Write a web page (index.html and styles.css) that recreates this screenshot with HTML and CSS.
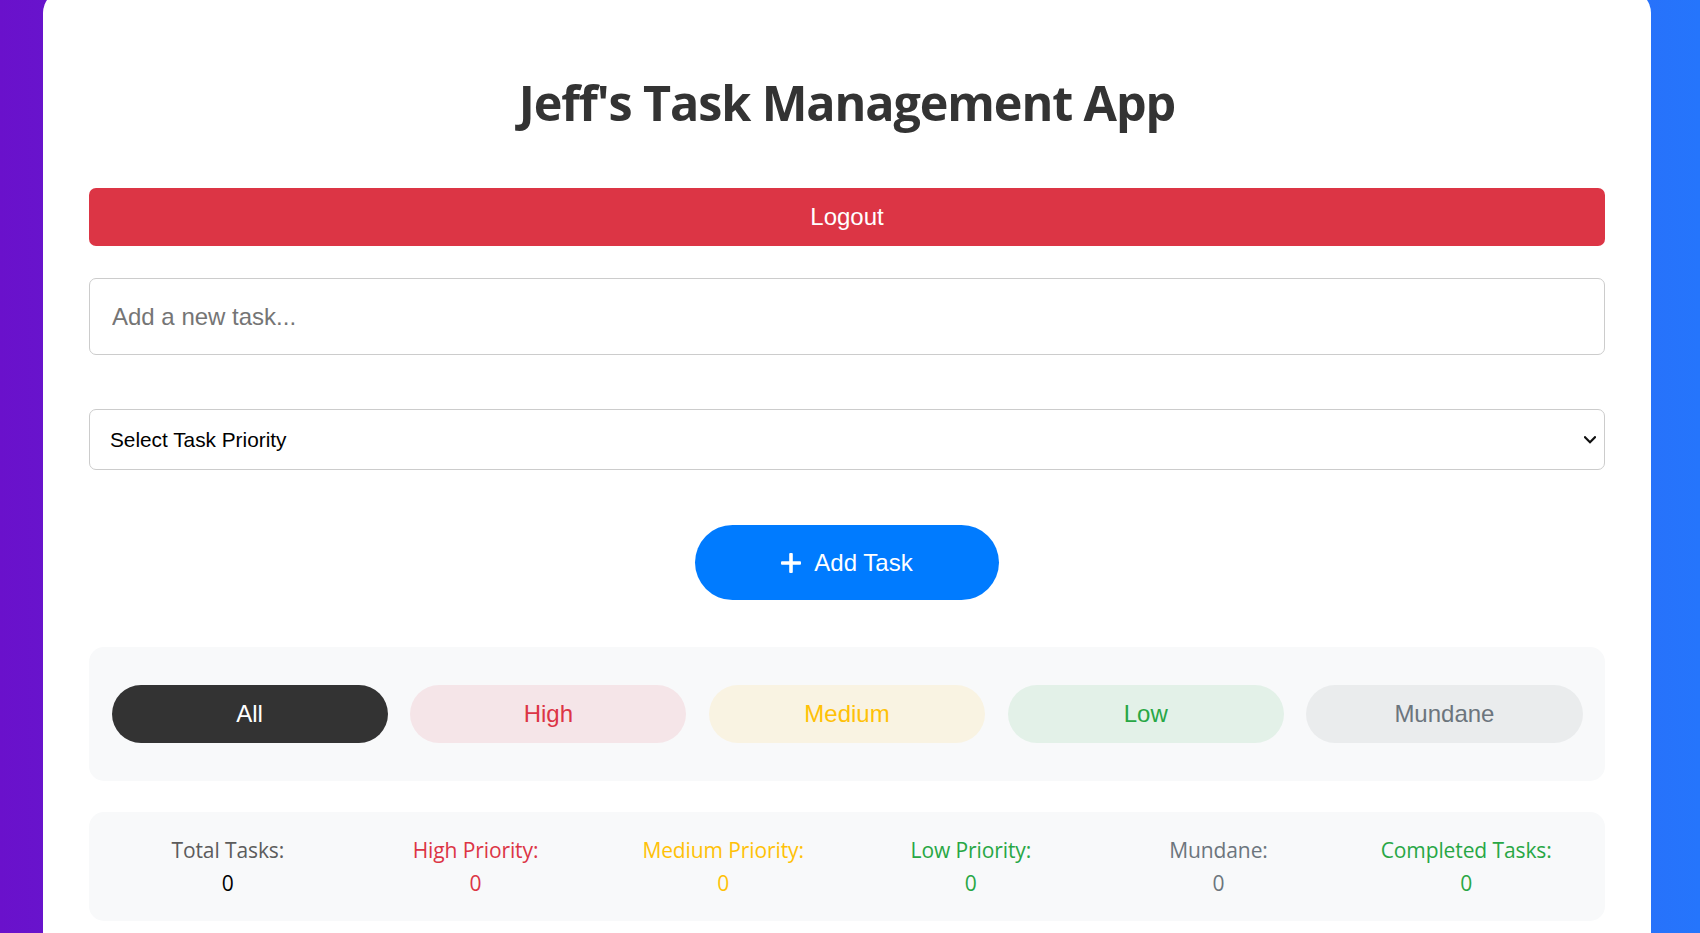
FILE: index.html
```html
<!DOCTYPE html>
<html lang="en">
<head>
<meta charset="utf-8">
<title>Jeff's Task Management App</title>
<link rel="stylesheet" href="styles.css">
</head>
<body>
  <main class="card">
    <h1 class="title">Jeff's Task Management App</h1>

    <button class="logout-btn" type="button">Logout</button>

    <input class="task-input" type="text" placeholder="Add a new task...">

    <div class="select-wrap">
      <select class="priority-select">
        <option>Select Task Priority</option>
        <option>High</option>
        <option>Medium</option>
        <option>Low</option>
        <option>Mundane</option>
      </select>
      <svg class="select-chevron" viewBox="0 0 12 8" width="12" height="8" aria-hidden="true">
        <path d="M1 1.2 L6 6.2 L11 1.2" fill="none" stroke="#111" stroke-width="2.2" stroke-linecap="square"/>
      </svg>
    </div>

    <div class="add-row">
      <button class="add-btn" type="button">
        <svg class="plus-icon" viewBox="0 0 20 20" width="20" height="20" aria-hidden="true">
          <rect x="0" y="8.2" width="20" height="3.6" rx="1" fill="#fff"/>
          <rect x="8.2" y="0" width="3.6" height="20" rx="1" fill="#fff"/>
        </svg>
        <span>Add Task</span>
      </button>
    </div>

    <div class="filter-panel">
      <button class="filter-btn filter-all" type="button">All</button>
      <button class="filter-btn filter-high" type="button">High</button>
      <button class="filter-btn filter-medium" type="button">Medium</button>
      <button class="filter-btn filter-low" type="button">Low</button>
      <button class="filter-btn filter-mundane" type="button">Mundane</button>
    </div>

    <div class="stats-panel">
      <div class="stat stat-total">
        <div class="stat-label">Total Tasks:</div>
        <div class="stat-value">0</div>
      </div>
      <div class="stat stat-high">
        <div class="stat-label">High Priority:</div>
        <div class="stat-value">0</div>
      </div>
      <div class="stat stat-medium">
        <div class="stat-label">Medium Priority:</div>
        <div class="stat-value">0</div>
      </div>
      <div class="stat stat-low">
        <div class="stat-label">Low Priority:</div>
        <div class="stat-value">0</div>
      </div>
      <div class="stat stat-mundane">
        <div class="stat-label">Mundane:</div>
        <div class="stat-value">0</div>
      </div>
      <div class="stat stat-completed">
        <div class="stat-label">Completed Tasks:</div>
        <div class="stat-value">0</div>
      </div>
    </div>
  </main>
</body>
</html>
```

FILE: styles.css
```css
html {
  overflow: hidden;
}

body {
  margin: 0;
  min-height: 100vh;
  background: linear-gradient(to right, #6a11cb, #2575fc);
  font-family: "Open Sans", "Noto Sans", sans-serif;
}

.card {
  box-sizing: border-box;
  width: 1608px;
  margin: -10px 0 0 43px;
  padding: 46px 46px 46px;
  background: #fff;
  border-radius: 23px;
  display: flex;
  flex-direction: column;
}

.title {
  margin: 34px 0 53px;
  text-align: center;
  font-size: 48.5px;
  line-height: 65px;
  font-weight: 700;
  color: #333;
  letter-spacing: -1.1px;
}

.logout-btn {
  font-family: "Liberation Sans", Arial, sans-serif;
  font-size: 24px;
  line-height: 28px;
  padding: 15px 0;
  border: none;
  border-radius: 7px;
  background: #dc3545;
  color: #fff;
  margin-bottom: 32px;
}

.task-input {
  box-sizing: border-box;
  height: 77px;
  padding: 0 22px;
  border: 1px solid #ccc;
  border-radius: 7px;
  font-family: "Liberation Sans", Arial, sans-serif;
  font-size: 24px;
  color: #222;
  margin: 0 0 54px;
  outline: none;
}

.task-input::placeholder {
  color: #757575;
}

.select-wrap {
  position: relative;
  margin-bottom: 55px;
}

.priority-select {
  box-sizing: border-box;
  width: 100%;
  height: 61px;
  padding: 0 40px 0 20px;
  border: 1px solid #ccc;
  border-radius: 7px;
  background: #fff;
  font-family: "Liberation Sans", Arial, sans-serif;
  font-size: 20.8px;
  color: #000;
  appearance: none;
  -webkit-appearance: none;
  outline: none;
}

.select-chevron {
  position: absolute;
  right: 9px;
  top: 26.5px;
  pointer-events: none;
}

.add-row {
  display: flex;
  justify-content: center;
  margin-bottom: 47px;
}

.add-btn {
  display: inline-flex;
  align-items: center;
  gap: 13px;
  height: 75px;
  padding: 0 86px;
  border: none;
  border-radius: 38px;
  background: #007bff;
  color: #fff;
  font-family: "Liberation Sans", Arial, sans-serif;
  font-size: 24px;
}

.plus-icon {
  display: block;
  flex: none;
}

.filter-panel {
  display: flex;
  gap: 22.5px;
  padding: 38px 22.5px;
  background: #f8f9fa;
  border-radius: 15px;
  margin-bottom: 31px;
}

.filter-btn {
  flex: 1;
  height: 58px;
  border: none;
  border-radius: 29px;
  font-family: "Liberation Sans", Arial, sans-serif;
  font-size: 24px;
}

.filter-all {
  background: #333;
  color: #fff;
}

.filter-high {
  background: #f5e5e8;
  color: #dc3545;
}

.filter-medium {
  background: #f9f3e2;
  color: #ffc107;
}

.filter-low {
  background: #e3f1e8;
  color: #28a745;
}

.filter-mundane {
  background: #eaeced;
  color: #6c757d;
}

.stats-panel {
  display: grid;
  grid-template-columns: repeat(6, 1fr);
  padding: 24px 15px;
  background: #f8f9fa;
  border-radius: 15px;
}

.stat {
  text-align: center;
  font-size: 21px;
  line-height: 28.6px;
  letter-spacing: -0.1px;
}

.stat-label {
  margin-bottom: 4px;
}

.stat-total .stat-label {
  color: #5c5c5c;
}

.stat-total .stat-value {
  color: #000;
}

.stat-high {
  color: #dc3545;
}

.stat-medium {
  color: #ffc107;
}

.stat-low {
  color: #28a745;
}

.stat-mundane {
  color: #6c757d;
}

.stat-completed {
  color: #28a745;
}
```
